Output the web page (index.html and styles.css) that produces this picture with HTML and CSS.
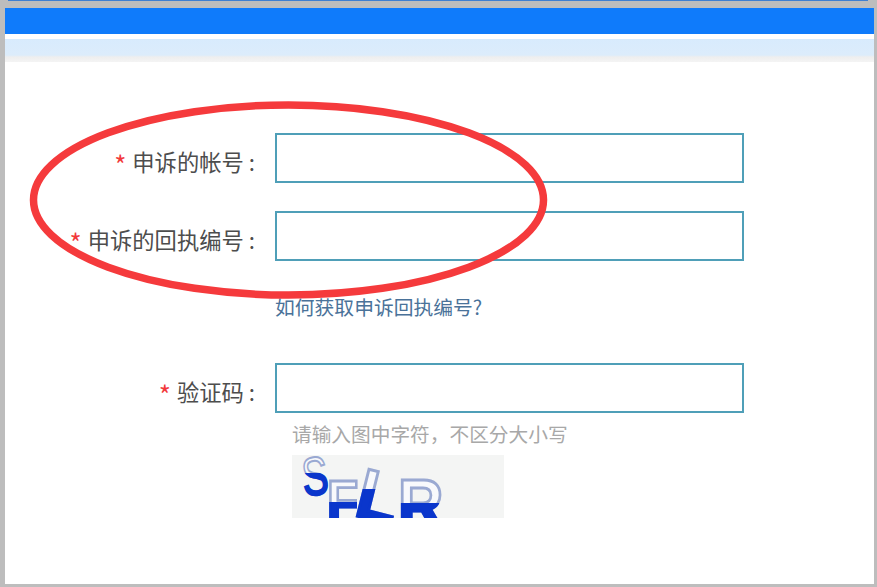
FILE: index.html
```html
<!DOCTYPE html>
<html lang="zh-CN">
<head>
    <meta charset="UTF-8">
    <meta name="viewport" content="width=device-width, initial-scale=1.0">
    <title>申诉</title>
    <link rel="stylesheet" href="styles.css">
</head>
<body>
    <div class="frame">
        <div class="top-strip"></div>
        <div class="panel">
            <div class="blue-bar"></div>
            <div class="sub-bar"></div>

            <form class="appeal-form">
                <div class="form-row">
                    <label class="form-label" for="account"><span class="star">*</span> 申诉的帐号<span class="colon">:</span></label>
                    <input class="form-input" type="text" id="account">
                </div>
                <div class="form-row">
                    <label class="form-label" for="receipt"><span class="star">*</span> 申诉的回执编号<span class="colon">:</span></label>
                    <input class="form-input" type="text" id="receipt">
                </div>
                <a class="help-link" href="#">如何获取申诉回执编号?</a>
                <div class="form-row">
                    <label class="form-label" for="code"><span class="star">*</span> 验证码<span class="colon">:</span></label>
                    <input class="form-input" type="text" id="code">
                </div>
                <p class="hint">请输入图中字符，不区分大小写</p>

                <!-- 验证码图片，底部被裁切 -->
                <svg class="captcha" width="212" height="63" viewBox="0 0 212 63">
                    <defs>
                        <clipPath id="clip-s"><rect x="0" y="18" width="45" height="45"/></clipPath>
                        <clipPath id="clip-f"><rect x="30" y="47" width="35" height="16"/></clipPath>
                        <clipPath id="clip-l"><rect x="55" y="34" width="48" height="29"/></clipPath>
                        <clipPath id="clip-r"><rect x="100" y="48" width="70" height="15"/></clipPath>
                    </defs>
                    <rect class="captcha-bg" width="212" height="63"/>

                    <text class="cap-line cap-thin" transform="translate(12 41) rotate(-6) scale(0.72 1)" font-size="54">S</text>
                    <text class="cap-line" transform="translate(35 67) scale(0.85 1)" font-size="60">F</text>
                    <text class="cap-line" transform="translate(61 60) rotate(14) scale(0.95 1)" font-size="70">L</text>
                    <text class="cap-line" transform="translate(106 74) scale(0.9 1)" font-size="70">R</text>

                    <g clip-path="url(#clip-s)">
                        <text class="cap-fill cap-thin" transform="translate(12 41) rotate(-6) scale(0.72 1)" font-size="54">S</text>
                    </g>
                    <g clip-path="url(#clip-f)">
                        <text class="cap-fill" transform="translate(35 67) scale(0.85 1)" font-size="60">F</text>
                    </g>
                    <g clip-path="url(#clip-l)">
                        <text class="cap-fill" transform="translate(61 60) rotate(14) scale(0.95 1)" font-size="70">L</text>
                    </g>
                    <g clip-path="url(#clip-r)">
                        <text class="cap-fill" transform="translate(106 74) scale(0.9 1)" font-size="70">R</text>
                    </g>
                </svg>
            </form>

            <!-- 红色圈注 -->
            <svg class="circle-mark" width="877" height="587" viewBox="0 0 877 587">
                <ellipse cx="288.5" cy="200" rx="255" ry="95" fill="none" stroke="#f53a3c" stroke-width="7.5"/>
            </svg>
        </div>
    </div>
</body>
</html>
```

FILE: styles.css
```css
body {
    margin: 0;
    font-family: "Noto Sans CJK SC", "Noto Sans", sans-serif;
}

.frame {
    box-sizing: border-box;
    height: 587px;
    display: flex;
    flex-direction: column;
    padding: 0 3px 3px 5px;
    background-color: #bdbdbd;
}

.top-strip {
    height: 1px;
    margin: 0 6px 7px 3px;
    background-color: #3f7fd0;
}

.panel {
    flex: 1;
    background-color: #fff;
}

.blue-bar {
    height: 26px;
    background-color: #0f7bfb;
}

.sub-bar {
    height: 23px;
    margin-top: 5px;
    background: linear-gradient(#d8ebfd 0, #dcecfb 70%, #eeeeee 78%, #f4f4f4 100%);
}

.appeal-form {
    display: flex;
    flex-direction: column;
    padding-top: 71px;
}

.form-row {
    display: flex;
    align-items: center;
    gap: 17px;
    margin-bottom: 28px;
}

.form-label {
    box-sizing: border-box;
    width: 253px;
    padding: 5px 3px 0 0;
    text-align: right;
    font-size: 22.3px;
    line-height: 30px;
    color: #4d4d4d;
    white-space: nowrap;
}

.colon {
    margin-left: 5px;
}

.star {
    margin-right: 1px;
    font-size: 26px;
    line-height: 20px;
    vertical-align: -4px;
    color: #f2383a;
}

.form-input {
    box-sizing: border-box;
    width: 469px;
    height: 50px;
    padding: 0 10px;
    border: 2px solid #4f9fb8;
    background-color: #fff;
}

.help-link {
    height: 70px;
    margin: 4px 0 0 270px;
    font-size: 19.8px;
    line-height: 28px;
    color: #4a7299;
    text-decoration: none;
}

.hint {
    margin: -21px 0 0 287px;
    font-size: 19.7px;
    line-height: 28px;
    color: #a8a8a8;
}

.captcha {
    display: block;
    margin: 7px 0 0 287px;
}

.captcha-bg {
    fill: #f4f5f4;
}

.cap-line,
.cap-fill {
    font-family: "Liberation Sans", sans-serif;
    font-weight: bold;
    stroke-width: 3;
}

.cap-line {
    fill: #f8f9fc;
    stroke: #9aa9d2;
}

.cap-fill {
    fill: #0a36cc;
    stroke: #0a36cc;
}

.cap-thin {
    font-weight: normal;
    stroke-width: 2;
}

.circle-mark {
    position: absolute;
    top: 0;
    left: 0;
    pointer-events: none;
}
```
